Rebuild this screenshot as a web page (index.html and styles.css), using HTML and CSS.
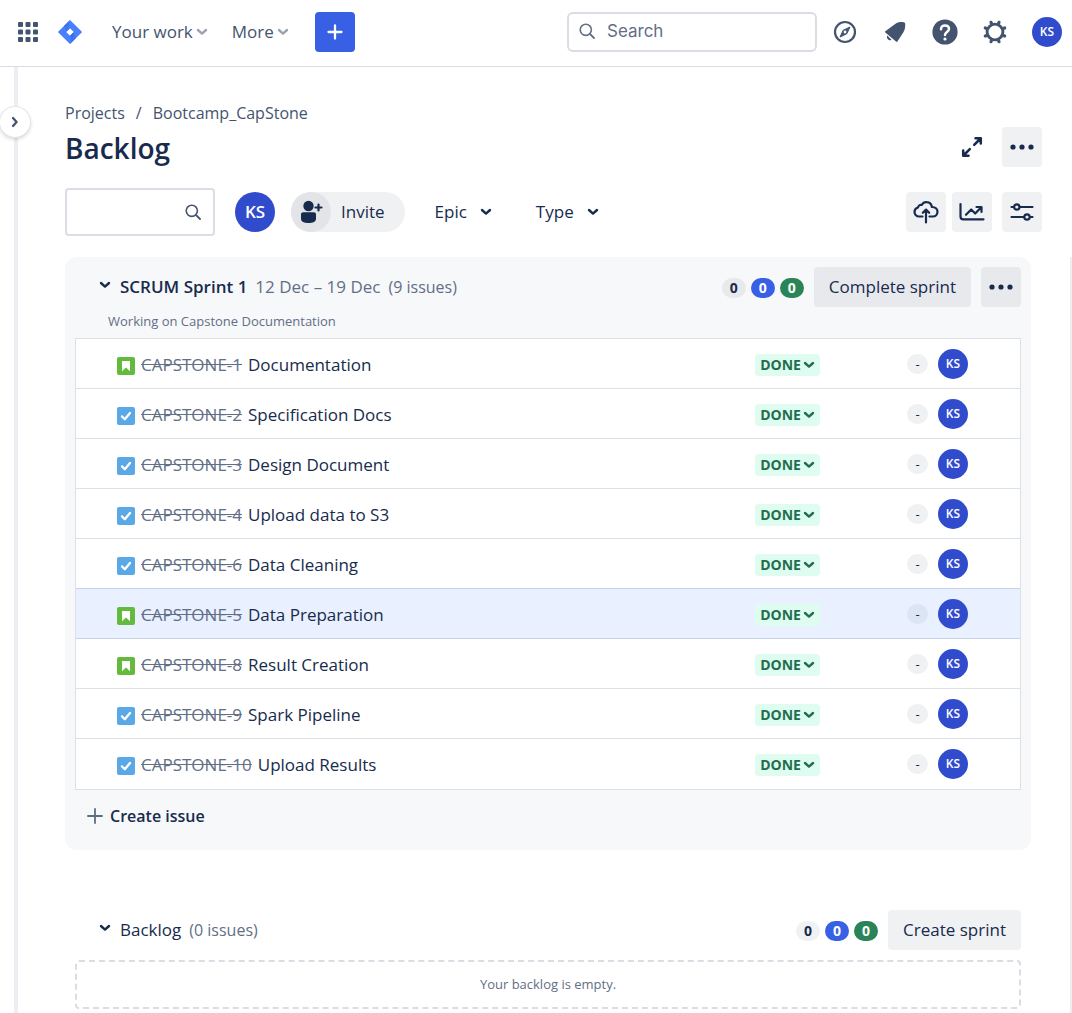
FILE: index.html
```html
<!DOCTYPE html>
<html lang="en">
<head>
<meta charset="utf-8">
<meta name="viewport" content="width=device-width, initial-scale=1">
<title>Backlog - Bootcamp_CapStone</title>
<link rel="stylesheet" href="styles.css">
</head>
<body>
<svg class="sprite" aria-hidden="true">
  <symbol id="chevron" viewBox="0 0 12 8"><path d="M2 2l4 3.600L10 2" fill="none" stroke="currentColor" stroke-width="2.400" stroke-linecap="round" stroke-linejoin="round"/></symbol>
  <symbol id="search" viewBox="0 0 16 16"><circle cx="6.800" cy="6.800" r="5.600" fill="none" stroke="currentColor" stroke-width="1.600"/><path d="M11 11l4 4" stroke="currentColor" stroke-width="1.800" stroke-linecap="round"/></symbol>
  <symbol id="dots" viewBox="0 0 24 6"><circle cx="3" cy="3" r="2.600" fill="currentColor"/><circle cx="12" cy="3" r="2.600" fill="currentColor"/><circle cx="21" cy="3" r="2.600" fill="currentColor"/></symbol>
  <symbol id="story" viewBox="0 0 18 18"><rect width="18" height="18" rx="2" fill="#63ba3c"/><path d="M5 4h8v10.200L9 10.600l-4 3.600z" fill="#fff"/></symbol>
  <symbol id="task" viewBox="0 0 18 18"><rect width="18" height="18" rx="2" fill="#5aa8e6"/><path d="M5 9.400l2.800 2.800L13 6" fill="none" stroke="#fff" stroke-width="2.300" stroke-linecap="round" stroke-linejoin="round"/></symbol>
</svg>

<header class="topbar">
  <button class="plain apps" aria-label="Switch apps">
    <svg width="20" height="20" viewBox="0 0 20 20" fill="currentColor"><rect width="5" height="5" rx="1"/><rect x="7.5" width="5" height="5" rx="1"/><rect x="15" width="5" height="5" rx="1"/><rect y="7.5" width="5" height="5" rx="1"/><rect x="7.5" y="7.5" width="5" height="5" rx="1"/><rect x="15" y="7.5" width="5" height="5" rx="1"/><rect y="15" width="5" height="5" rx="1"/><rect x="7.5" y="15" width="5" height="5" rx="1"/><rect x="15" y="15" width="5" height="5" rx="1"/></svg>
  </button>
  <a class="logo" href="#" aria-label="Home">
    <svg width="24" height="24" viewBox="0 0 24 24"><defs><linearGradient id="lg" x1="0" y1="0" x2="1" y2="1"><stop offset="0" stop-color="#2f66dd"/><stop offset="1" stop-color="#4a80ff"/></linearGradient></defs><path d="M12 0L23.4 11.2a1.1 1.1 0 0 1 0 1.6L12 24 .6 12.8a1.1 1.1 0 0 1 0-1.6zM12 8.2L8.2 12l3.8 3.8 3.8-3.8z" fill="#4a80ff" fill-rule="evenodd"/><path d="M12 0c-1.700 2-1.700 6 0 8.200L8.500 11.700 6 5.900z" fill="url(#lg)"/><path d="M12 24c1.700-2 1.700-6 0-8.200l3.500-3.500L18 18.100z" fill="url(#lg)"/></svg>
  </a>
  <nav class="menu" aria-label="Primary">
    <button class="plain menu-item">Your work<svg class="chev"><use href="#chevron"/></svg></button>
    <button class="plain menu-item">More<svg class="chev"><use href="#chevron"/></svg></button>
  </nav>
  <button class="create" aria-label="Create">
    <svg width="16" height="16" viewBox="0 0 16 16"><path d="M8 1.500v13M1.500 8h13" stroke="#fff" stroke-width="2.300" stroke-linecap="round"/></svg>
  </button>
  <label class="global-search">
    <svg width="16" height="16"><use href="#search"/></svg>
    <input type="search" placeholder="Search" aria-label="Search">
  </label>
  <div class="tools">
    <button class="plain tool" aria-label="Discover">
      <svg width="24" height="24" viewBox="0 0 24 24"><circle cx="12" cy="12" r="10" fill="none" stroke="currentColor" stroke-width="2.200"/><path d="M17 7l-3.200 6.800L7 17l3.200-6.800z" fill="currentColor" stroke="currentColor" stroke-linejoin="round"/><circle cx="12" cy="12" r="1.400" fill="#fff"/></svg>
    </button>
    <button class="plain tool" aria-label="Notifications">
      <svg width="24" height="24" viewBox="0 0 24 24" fill="currentColor"><path d="M2.300 11.200L12.500 3.700c2.800-1.600 5.800-1.700 8-1.500 1.300.1 1.700.5 1.700 1.700.1 3-.2 5.700-1.800 8.300l-6 9.300c-.4.600-.9.600-1.400.1L2.300 12.400c-.5-.4-.5-.8 0-1.200z"/><path d="M4.200 15.500l4.300 4.200c-1.300.8-2.600.6-3.500-.3-1-1-1.500-2.500-.8-3.900z"/></svg>
    </button>
    <button class="plain tool" aria-label="Help">
      <svg width="26" height="26" viewBox="0 0 26 26"><circle cx="13" cy="13" r="12.600" fill="currentColor"/><path d="M9 10.300c0-2.400 1.700-3.900 4-3.900s4 1.500 4 3.700c0 2.900-4 3.100-4 5.900" fill="none" stroke="#fff" stroke-width="2.500" stroke-linecap="round"/><circle cx="13" cy="20" r="1.600" fill="#fff"/></svg>
    </button>
    <button class="plain tool" aria-label="Settings">
      <svg width="24" height="24" viewBox="-12 -12 24 24" fill="none" stroke="currentColor"><circle r="7.900" stroke-width="2.900"/><path d="M3.500 -8.400L4 -9.700M8.400 -3.500L9.700 -4M8.400 3.500L9.700 4M3.500 8.400L4 9.700M-3.500 8.400L-4 9.700M-8.400 3.500L-9.700 4M-8.400 -3.500L-9.700 -4M-3.500 -8.400L-4 -9.700" stroke-width="3.200" stroke-linecap="round"/></svg>
    </button>
    <button class="avatar avatar-sm" aria-label="Your profile">KS</button>
  </div>
</header>

<div class="shell">
  <aside class="rail">
    <button class="expand" aria-label="Expand sidebar"><svg width="8" height="12" viewBox="0 0 8 12"><path d="M2 2l3.600 4L2 10" fill="none" stroke="currentColor" stroke-width="2.300" stroke-linecap="round" stroke-linejoin="round"/></svg></button>
  </aside>
  <main class="main">
    <nav class="crumbs" aria-label="Breadcrumbs"><a href="#">Projects</a><span>/</span><a href="#">Bootcamp_CapStone</a></nav>
    <div class="title-row">
      <h1>Backlog</h1>
      <button class="plain square" aria-label="Full screen">
        <svg width="22" height="22" viewBox="0 0 22 22" fill="none" stroke="currentColor" stroke-width="2.500" stroke-linecap="round" stroke-linejoin="round"><path d="M14.500 2.200h5.300v5.300M19 3l-5.800 5.800M7.500 19.800H2.200v-5.300M3 19l5.800-5.800"/></svg>
      </button>
      <button class="square filled" aria-label="More actions"><svg width="24" height="6"><use href="#dots"/></svg></button>
    </div>
    <div class="toolbar">
      <label class="board-search"><input type="text" aria-label="Search backlog"><svg width="16" height="16"><use href="#search"/></svg></label>
      <button class="avatar avatar-lg" aria-label="Filter by KS">KS</button>
      <button class="invite"><span class="invite-icon"><svg width="24" height="24" viewBox="0 0 24 24" fill="currentColor"><circle cx="9.500" cy="6" r="5.200"/><path d="M2 14.500c0-1.500.8-2.300 2.300-2.300h10.400c1.500 0 2.300.8 2.300 2.300v4.300c0 3-3.200 4.200-7.500 4.200S2 21.800 2 18.800z"/><path d="M19.500 4.500v6M16.500 7.500h6" stroke="currentColor" stroke-width="2.200" stroke-linecap="round"/></svg></span>Invite</button>
      <button class="plain filter">Epic<svg class="chev"><use href="#chevron"/></svg></button>
      <button class="plain filter">Type<svg class="chev"><use href="#chevron"/></svg></button>
      <div class="view-tools">
        <button class="square filled" aria-label="Import">
          <svg width="26" height="24" viewBox="0 0 26 24" fill="none" stroke="currentColor" stroke-width="2.200" stroke-linecap="round" stroke-linejoin="round"><path d="M9.500 16.500H6.200C3.500 16.500 1.500 14.600 1.500 12c0-2.200 1.400-4 3.500-4.500C5.400 5.600 7 4.600 8.700 5c1.200-2 3-3 5-2.800 2.700.2 4.700 2 5.200 4.800 3.300.2 5.600 2 5.600 4.800s-2 4.700-4.700 4.700h-3.300M13 22.500V10.500M9.800 12.800L13 9.600l3.200 3.200"/></svg>
        </button>
        <button class="square filled" aria-label="Insights">
          <svg width="26" height="20" viewBox="0 0 26 20" fill="none" stroke="currentColor" stroke-width="2.200" stroke-linecap="round" stroke-linejoin="round"><path d="M1.500 2v12.500c0 2 .8 2.800 2.800 2.800h20.200M7 12.800l5.200-5.300 4 4L22 5.500M17.500 5h5v5"/></svg>
        </button>
        <button class="square filled last" aria-label="View settings">
          <svg width="24" height="20" viewBox="0 0 24 20" fill="none" stroke="currentColor" stroke-width="2.200" stroke-linecap="round"><path d="M1.500 5h2M10 5h12.500M1.500 15h12M20.500 15h2"/><circle cx="6.800" cy="5" r="2.700"/><circle cx="17" cy="15" r="2.700"/></svg>
        </button>
      </div>
    </div>

    <div class="scroller">
      <section class="sprint" aria-label="SCRUM Sprint 1">
        <div class="section-head">
          <button class="plain toggle" aria-label="Collapse"><svg class="chev"><use href="#chevron"/></svg></button>
          <h2>SCRUM Sprint 1</h2><span class="dates">12 Dec – 19 Dec</span><span class="count">(9 issues)</span>
          <div class="section-actions">
            <span class="badge">0</span><span class="badge blue">0</span><span class="badge green">0</span>
            <button class="btn dark">Complete sprint</button>
            <button class="square dark" aria-label="Sprint actions"><svg width="24" height="6"><use href="#dots"/></svg></button>
          </div>
        </div>
        <p class="goal">Working on Capstone Documentation</p>
        <ul class="issues">
          <li><svg class="kind"><use href="#story"/></svg><a class="key" href="#">CAPSTONE-1</a><span class="summary">Documentation</span><button class="status">DONE<svg class="chev"><use href="#chevron"/></svg></button><span class="points">-</span><button class="avatar avatar-sm">KS</button></li>
          <li><svg class="kind"><use href="#task"/></svg><a class="key" href="#">CAPSTONE-2</a><span class="summary">Specification Docs</span><button class="status">DONE<svg class="chev"><use href="#chevron"/></svg></button><span class="points">-</span><button class="avatar avatar-sm">KS</button></li>
          <li><svg class="kind"><use href="#task"/></svg><a class="key" href="#">CAPSTONE-3</a><span class="summary">Design Document</span><button class="status">DONE<svg class="chev"><use href="#chevron"/></svg></button><span class="points">-</span><button class="avatar avatar-sm">KS</button></li>
          <li><svg class="kind"><use href="#task"/></svg><a class="key" href="#">CAPSTONE-4</a><span class="summary">Upload data to S3</span><button class="status">DONE<svg class="chev"><use href="#chevron"/></svg></button><span class="points">-</span><button class="avatar avatar-sm">KS</button></li>
          <li><svg class="kind"><use href="#task"/></svg><a class="key" href="#">CAPSTONE-6</a><span class="summary">Data Cleaning</span><button class="status">DONE<svg class="chev"><use href="#chevron"/></svg></button><span class="points">-</span><button class="avatar avatar-sm">KS</button></li>
          <li class="selected"><svg class="kind"><use href="#story"/></svg><a class="key" href="#">CAPSTONE-5</a><span class="summary">Data Preparation</span><button class="status">DONE<svg class="chev"><use href="#chevron"/></svg></button><span class="points">-</span><button class="avatar avatar-sm">KS</button></li>
          <li><svg class="kind"><use href="#story"/></svg><a class="key" href="#">CAPSTONE-8</a><span class="summary">Result Creation</span><button class="status">DONE<svg class="chev"><use href="#chevron"/></svg></button><span class="points">-</span><button class="avatar avatar-sm">KS</button></li>
          <li><svg class="kind"><use href="#task"/></svg><a class="key" href="#">CAPSTONE-9</a><span class="summary">Spark Pipeline</span><button class="status">DONE<svg class="chev"><use href="#chevron"/></svg></button><span class="points">-</span><button class="avatar avatar-sm">KS</button></li>
          <li><svg class="kind"><use href="#task"/></svg><a class="key" href="#">CAPSTONE-10</a><span class="summary">Upload Results</span><button class="status">DONE<svg class="chev"><use href="#chevron"/></svg></button><span class="points">-</span><button class="avatar avatar-sm">KS</button></li>
        </ul>
        <button class="plain add-issue"><svg width="16" height="16" viewBox="0 0 16 16"><path d="M8 1v14M1 8h14" stroke="#5e6c84" stroke-width="1.800" stroke-linecap="round"/></svg>Create issue</button>
      </section>

      <section class="backlog" aria-label="Backlog">
        <div class="section-head">
          <button class="plain toggle" aria-label="Collapse"><svg class="chev"><use href="#chevron"/></svg></button>
          <h2 class="medium">Backlog</h2><span class="count">(0 issues)</span>
          <div class="section-actions">
            <span class="badge">0</span><span class="badge blue">0</span><span class="badge green">0</span>
            <button class="btn filled">Create sprint</button>
          </div>
        </div>
        <p class="empty">Your backlog is empty.</p>
      </section>
    </div>
  </main>
</div>
</body>
</html>
```

FILE: styles.css
```css
:root {
  --navy: #172b4d;
  --slate: #44546f;
  --muted: #626f86;
  --line: #dcdfe4;
  --neutral: #f0f1f3;
  --neutral-dark: #e8e9ed;
  --brand: #3860e4;
  --person: #304ccc;
}

* { box-sizing: border-box; }

body {
  margin: 0;
  min-height: 100vh;
  display: flex;
  flex-direction: column;
  background: #fff;
  color: var(--navy);
  font: 400 17px/24px "Open Sans", "Noto Sans", sans-serif;
}

button, input { font: inherit; color: inherit; }
button { border: 0; padding: 0; cursor: pointer; white-space: nowrap; }
a { color: inherit; text-decoration: none; }
h1, h2, p, ul { margin: 0; padding: 0; }
svg { display: block; flex: none; }

.sprite { position: absolute; width: 0; height: 0; }
.plain { background: none; }
.chev { width: 12px; height: 8px; }

.avatar {
  flex: none;
  border-radius: 50%;
  background: var(--person);
  color: #fff;
  font-weight: 600;
  text-align: center;
}
.avatar-sm { width: 30px; height: 30px; font-size: 12px; line-height: 30px; }
.avatar-lg { width: 40px; height: 40px; font-size: 17px; line-height: 40px; }

.topbar {
  display: flex;
  align-items: center;
  height: 67px;
  padding: 0 10px 3px 18px;
  border-bottom: 1px solid #dddce5;
  color: var(--slate);
}
.logo { margin-left: 20px; }
.menu { display: flex; gap: 24px; margin-left: 30px; font-weight: 500; }
.menu-item { display: flex; align-items: center; gap: 3px; }
.menu-item .chev { color: #9da2b3; }
.create {
  display: grid;
  place-items: center;
  width: 40px;
  height: 40px;
  margin-left: 26px;
  border-radius: 4px;
  background: var(--brand);
}
.global-search {
  display: flex;
  align-items: center;
  gap: 12px;
  width: 250px;
  height: 40px;
  margin-left: auto;
  padding: 0 10px 2px;
  border: 2px solid #dddce5;
  border-radius: 6px;
  color: var(--muted);
}
.global-search input {
  flex: 1;
  min-width: 0;
  padding: 0;
  border: 0;
  outline: 0;
  background: none;
  font-family: Inter, sans-serif;
}
.global-search input::placeholder { color: var(--muted); opacity: 1; }
.tools { display: flex; align-items: center; gap: 10px; margin-left: 8px; }
.tool { display: grid; place-items: center; width: 40px; height: 40px; }
.tools .avatar { margin-left: 7px; }

.shell { flex: 1; display: flex; }
.rail {
  flex: none;
  width: 35px;
  padding-top: 40px;
  background: linear-gradient(#eeedf3, #eeedf3) 14px 0 / 4px 100% no-repeat;
}
.expand {
  display: grid;
  place-items: center;
  width: 30px;
  height: 30px;
  border-radius: 50%;
  background: #fff;
  color: var(--slate);
  box-shadow: 0 0 0 1px #e4e4ea, 0 2px 4px #0003;
}

.main { flex: 1; min-width: 0; padding: 34px 0 0 30px; }
.crumbs { display: flex; gap: 11px; color: var(--slate); font-size: 16px; }
.title-row { display: flex; align-items: center; gap: 10px; padding-right: 30px; }
h1 { flex: 1; padding-top: 2px; font-size: 28px; line-height: 42px; font-weight: 600; }
.square { display: grid; place-items: center; width: 40px; height: 40px; border-radius: 4px; }
.filled { background: var(--neutral); }
.dark { background: var(--neutral-dark); }

.toolbar { display: flex; align-items: center; margin-top: 19px; padding-right: 30px; }
.board-search {
  display: flex;
  align-items: center;
  width: 150px;
  height: 48px;
  padding: 0 12px;
  border: 2px solid #dddce5;
  border-radius: 4px;
  color: var(--slate);
}
.board-search input { flex: 1; min-width: 0; border: 0; outline: 0; background: none; }
.toolbar .avatar { margin: 0 16px 0 20px; }
.invite {
  display: flex;
  align-items: center;
  gap: 10px;
  padding-right: 20px;
  border-radius: 20px;
  background: var(--neutral);
  font-weight: 500;
}
.invite-icon {
  display: grid;
  place-items: center;
  width: 40px;
  height: 40px;
  border-radius: 50%;
  background: #e3e4e8;
}
.filter { display: flex; align-items: center; gap: 13px; margin-left: 30px; font-weight: 500; }
.filter + .filter { margin-left: 44px; }
.view-tools { display: flex; gap: 6px; margin-left: auto; }
.view-tools .last { margin-left: 4px; }

.scroller { margin-top: 21px; padding-right: 39px; border-right: 2px solid #ededf1; }
.sprint { padding: 10px 10px 20px; border-radius: 12px; background: #f7f8fa; }
.section-head { display: flex; align-items: center; min-height: 40px; }
.toggle { display: grid; place-items: center; width: 20px; height: 24px; margin: 0 5px 4px 20px; }
h2 { font-size: 17px; line-height: 24px; font-weight: 600; }
.medium { font-weight: 500; }
.dates, .count { margin-left: 8px; color: var(--muted); }
.count { font-size: 16px; }
.section-actions { display: flex; align-items: center; gap: 10px; margin-left: auto; }
.badge {
  width: 24px;
  height: 20px;
  margin: 2px -5px 0 0;
  border-radius: 10px;
  background: var(--neutral-dark);
  font-size: 14px;
  line-height: 20px;
  font-weight: 700;
  text-align: center;
}
.badge.blue { background: var(--brand); color: #fff; }
.badge.green { margin-right: 0; background: #2a8458; color: #fff; }
.btn { height: 40px; padding: 0 15px; border-radius: 4px; font-weight: 500; }

.goal { padding: 4px 33px 7px; color: var(--muted); font-size: 13px; line-height: 20px; }
.issues { list-style: none; border: 1px solid var(--line); background: #fff; }
.issues li {
  display: flex;
  align-items: center;
  height: 50px;
  padding: 0 52px 0 41px;
  border-bottom: 1px solid var(--line);
}
.issues li:last-child { border-bottom: 0; }
.issues .selected { background: #e9f0ff; }
.issues .selected, .issues li:has(+ .selected) { border-color: #c9d1e4; }
.kind { width: 18px; height: 18px; margin-top: 4px; }
.key { margin: 2px 6px 0; color: var(--muted); text-decoration: line-through; }
.summary { flex: 1; margin-top: 2px; }
.status {
  display: flex;
  align-items: center;
  justify-content: center;
  gap: 2px;
  width: 65px;
  height: 22px;
  margin: 2px 87px 0 0;
  border-radius: 4px;
  background: #dffcf0;
  color: #216e4e;
  font-size: 14px;
  line-height: 22px;
  font-weight: 700;
}
.points {
  width: 21px;
  height: 20px;
  margin-right: 10px;
  border-radius: 10px;
  background: var(--neutral);
  font-size: 13px;
  line-height: 20px;
  text-align: center;
}
.selected .points { background: #dce5f4; }
.add-issue { display: flex; align-items: center; gap: 7px; margin: 14px 0 2px 12px; font-size: 16px; font-weight: 600; }

.backlog { margin-top: 60px; padding: 0 10px 4px; }
.backlog .badge:not(.blue, .green) { background: var(--neutral); }
.empty {
  margin-top: 10px;
  padding: 12px;
  border: 2px dashed #dddce5;
  border-radius: 4px;
  color: var(--muted);
  font-size: 13px;
  line-height: 21px;
  text-align: center;
}
```
